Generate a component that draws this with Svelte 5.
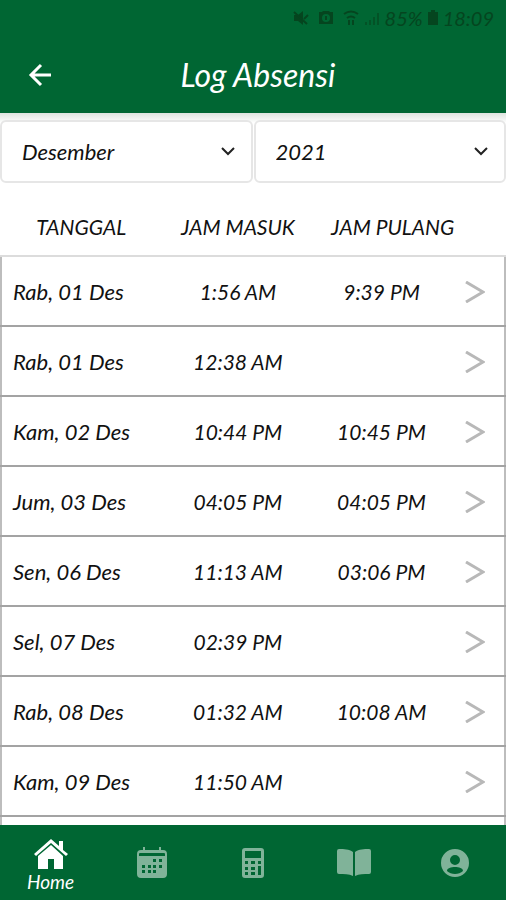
<script lang="ts">
	type Entry = { date: string; timeIn: string; timeOut?: string };

	const entries: Entry[] = [
		{ date: 'Rab, 01 Des', timeIn: '1:56 AM', timeOut: '9:39 PM' },
		{ date: 'Rab, 01 Des', timeIn: '12:38 AM' },
		{ date: 'Kam, 02 Des', timeIn: '10:44 PM', timeOut: '10:45 PM' },
		{ date: 'Jum, 03 Des', timeIn: '04:05 PM', timeOut: '04:05 PM' },
		{ date: 'Sen, 06 Des', timeIn: '11:13 AM', timeOut: '03:06 PM' },
		{ date: 'Sel, 07 Des', timeIn: '02:39 PM' },
		{ date: 'Rab, 08 Des', timeIn: '01:32 AM', timeOut: '10:08 AM' },
		{ date: 'Kam, 09 Des', timeIn: '11:50 AM' }
	];

	let month = $state('Desember');
	let year = $state('2021');
</script>

<div class="screen">
	<header>
		<div class="status">
			<svg width="16" height="18" viewBox="0 0 16 18">
				<path d="M1 6h4l5-4v14l-5-4H1z" fill="currentColor" />
				<path d="M1 3l13 12M11 10l4-4" stroke="currentColor" stroke-width="2" />
			</svg>
			<svg class="alarm" width="18" height="18" viewBox="0 0 18 18">
				<path
					d="M2 3h3l1-1h6l1 1h3v12H2zM9 5a4 4 0 1 0 0 8 4 4 0 0 0 0-8zM8 7h2v4H8z"
					fill="currentColor"
					fill-rule="evenodd"
				/>
			</svg>
			<svg class="wifi" width="16" height="18" viewBox="0 0 16 18" fill="none" stroke="currentColor" stroke-width="2">
				<path d="M1 5q7-5 14 0M4 9q4-3 8 0M6 11v5M10 16v-5" />
			</svg>
			<svg width="18" height="18" viewBox="0 0 18 18" stroke="currentColor" stroke-width="2">
				<path d="M3 16v-3M7 16v-5M11 16V8M15 16V4" opacity="0.6" />
			</svg>
			<span>85%</span>
			<svg width="12" height="18" viewBox="0 0 12 18">
				<path d="M4 1h4v2h3v13H1V3h3z" fill="currentColor" />
			</svg>
			<span class="clock">18:09</span>
		</div>
		<div class="title">
			<button aria-label="Kembali">
				<svg width="24" height="24" viewBox="0 0 24 24" fill="none" stroke="#fff" stroke-width="3">
					<path d="M23 12H3M13 2L3 12l10 10" />
				</svg>
			</button>
			<h1>Log Absensi</h1>
		</div>
	</header>

	<main>
		<div class="filters">
			<div class="field">
				<select aria-label="Bulan" bind:value={month}>
					<option>November</option>
					<option>Desember</option>
				</select>
				<svg width="14" height="9" viewBox="0 0 14 9"><path d="M1 1l6 6 6-6" /></svg>
			</div>
			<div class="field">
				<select aria-label="Tahun" bind:value={year}>
					<option>2020</option>
					<option>2021</option>
				</select>
				<svg width="14" height="9" viewBox="0 0 14 9"><path d="M1 1l6 6 6-6" /></svg>
			</div>
		</div>

		<table>
			<colgroup>
				<col class="col-date" />
				<col class="col-in" />
				<col class="col-out" />
				<col />
			</colgroup>
			<thead>
				<tr>
					<th class="head-date">TANGGAL</th>
					<th>JAM MASUK</th>
					<th class="head-out" colspan="2">JAM PULANG</th>
				</tr>
			</thead>
			<tbody>
				{#each entries as entry}
					<tr>
						<td class="date">{entry.date}</td>
						<td>{entry.timeIn}</td>
						<td>{entry.timeOut ?? ''}</td>
						<td class="more">
							<button aria-label="Detail {entry.date}">
								<svg width="20" height="22" viewBox="0 0 20 22">
									<path d="M1 1l17 10L1 21" />
								</svg>
							</button>
						</td>
					</tr>
				{/each}
				<tr aria-hidden="true"><td></td><td></td><td></td><td></td></tr>
			</tbody>
		</table>
	</main>

	<nav>
		<a href="#home" class="active">
			<svg width="34" height="32" viewBox="0 0 34 32" fill="currentColor">
				<path d="M17 1L0 16l2 2L17 5l15 13 2-2-5-4V3h-4v5z" />
				<path d="M17 7L4 18v13h10V21h6v10h9V18z" />
			</svg>
			<span>Home</span>
		</a>
		<a href="#calendar" aria-label="Kalender">
			<svg width="30" height="32" viewBox="0 0 30 32" fill="currentColor">
				<path
					d="M6 0h2v3h14V0h2v3h2a4 4 0 0 1 4 4v20a4 4 0 0 1-4 4H4a4 4 0 0 1-4-4V7a4 4 0 0 1 4-4h2zM3 6a1 1 0 0 0-1 1v2h26V7a1 1 0 0 0-1-1z
					M16 12h3v3h-3zM22 12h3v3h-3zM5 18h3v3H5zM11 18h3v3h-3zM16 18h3v3h-3zM22 18h3v3h-3zM5 23h3v3H5zM11 23h3v3h-3zM16 23h3v3h-3z"
					fill-rule="evenodd"
				/>
			</svg>
		</a>
		<a href="#calculator" aria-label="Kalkulator">
			<svg width="22" height="32" viewBox="0 0 22 32" fill="currentColor">
				<path
					d="M3 1h16a3 3 0 0 1 3 3v24a3 3 0 0 1-3 3H3a3 3 0 0 1-3-3V4a3 3 0 0 1 3-3z
					M3 4v7h16V4zM3 14v3h3v-3zM9 14v3h4v-3zM16 14v3h3v-3zM3 20v3h3v-3zM9 20v3h4v-3zM16 19v9h3v-9zM3 25v3h3v-3zM9 25v3h4v-3z"
					fill-rule="evenodd"
				/>
			</svg>
		</a>
		<a href="#book" aria-label="Buku">
			<svg width="34" height="30" viewBox="0 0 34 30" fill="currentColor">
				<path d="M16 4C12 1 7 1 2 1a2 2 0 0 0-2 2v21a2 2 0 0 0 2 2c5 0 10 0 14 2z" />
				<path d="M18 4c4-3 9-3 14-3a2 2 0 0 1 2 2v21a2 2 0 0 1-2 2c-5 0-10 0-14 2z" />
			</svg>
		</a>
		<a href="#profile" aria-label="Profil">
			<svg width="28" height="28" viewBox="0 0 28 28" fill="currentColor">
				<path
					d="M14 0a14 14 0 1 1 0 28 14 14 0 0 1 0-28zM14 6a5 5 0 1 0 0 10 5 5 0 0 0 0-10zM14 18c-4 0-8 1-8 4 4 4 12 4 16 0 0-3-4-4-8-4z"
					fill-rule="evenodd"
				/>
			</svg>
		</a>
	</nav>
</div>

<style>
	:global(body) {
		margin: 0;
	}

	.screen {
		display: flex;
		flex-direction: column;
		height: 100vh;
		overflow: hidden;
		background: #fff;
		color: #111;
		font-family: Lato, 'Open Sans', sans-serif;
		font-size: 21px;
		font-style: italic;
	}

	button {
		display: flex;
		padding: 0;
		border: 0;
		background: none;
	}

	header {
		flex: none;
		background: #006633;
	}

	.status {
		display: flex;
		align-items: center;
		justify-content: flex-end;
		height: 36px;
		padding-right: 12px;
		color: #05451f;
		font-size: 20px;
	}

	.alarm {
		margin: 0 8px;
	}

	.wifi {
		margin: 0 4px 0 0;
	}

	.status span {
		margin: 0 4px;
	}

	.status .clock {
		margin: 0 0 0 4px;
	}

	.title {
		display: grid;
		grid-template-columns: 68px 1fr 58px;
		align-items: center;
		height: 77px;
	}

	.title button {
		justify-self: center;
		margin-left: 12px;
	}

	h1 {
		margin: 0;
		color: #fff;
		font-size: 32px;
		font-weight: 400;
		line-height: 40px;
		text-align: center;
	}

	main {
		flex: 1;
		min-height: 0;
		overflow: hidden;
	}

	.filters {
		display: flex;
		gap: 1px;
		padding-top: 7px;
		background: linear-gradient(#dde4df, #fff 10px);
	}

	.field {
		display: grid;
		flex: 1;
		align-items: center;
	}

	.field select {
		grid-area: 1 / 1;
		width: 100%;
		height: 63px;
		padding: 0 20px;
		border: 2px solid #e6e6e6;
		border-radius: 6px;
		background: #fff;
		color: inherit;
		font: inherit;
		font-size: 22px;
		appearance: none;
	}

	.field svg {
		grid-area: 1 / 1;
		justify-self: end;
		margin-right: 18px;
		fill: none;
		stroke: #222;
		stroke-width: 2;
		pointer-events: none;
	}

	table {
		width: 100%;
		border-collapse: collapse;
		table-layout: fixed;
	}

	.col-date {
		width: 33%;
	}

	.col-in {
		width: 28%;
	}

	.col-out {
		width: 29%;
	}

	th {
		box-sizing: border-box;
		height: 73px;
		padding: 14px 0 0;
		border-bottom: 2px solid #dcdcdc;
		font-weight: 400;
		text-align: center;
		white-space: nowrap;
	}

	.head-date {
		padding-right: 6px;
	}

	.head-out {
		padding-right: 28px;
	}

	td {
		box-sizing: border-box;
		height: 70px;
		padding: 0;
		border-bottom: 2px solid #a3a3a3;
		text-align: center;
		white-space: nowrap;
	}

	td:first-child {
		border-left: 2px solid #bdbdbd;
	}

	td:last-child {
		border-right: 2px solid #bdbdbd;
	}

	.date {
		padding-left: 11px;
		font-size: 22px;
		text-align: left;
	}

	.more button {
		margin: 2px 0 0 10px;
	}

	.more svg {
		fill: none;
		stroke: #b8b8b8;
		stroke-width: 3;
	}

	nav {
		display: flex;
		flex: none;
		height: 75px;
		background: #006633;
	}

	nav a {
		display: flex;
		flex: 1;
		flex-direction: column;
		align-items: center;
		justify-content: center;
		color: #80b399;
		font-size: 19px;
		line-height: 24px;
		text-decoration: none;
	}

	nav .active {
		padding-top: 6px;
		color: #fff;
	}
</style>
